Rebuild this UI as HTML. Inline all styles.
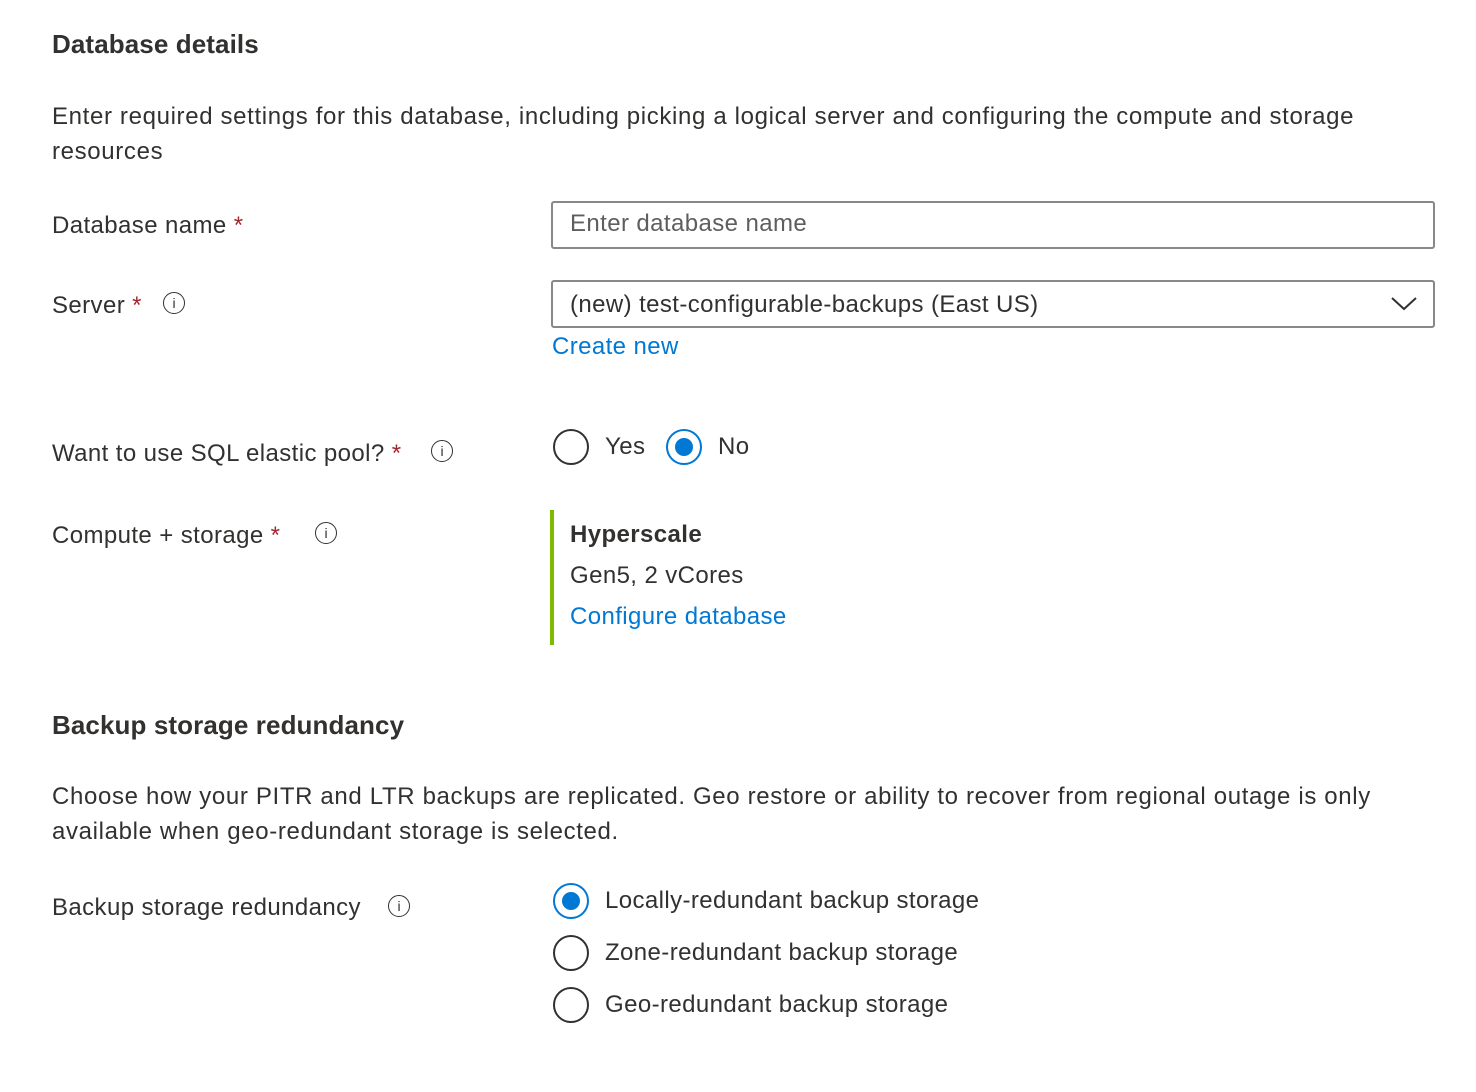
<!DOCTYPE html><html><head><style>
body{margin:0;width:1476px;height:1092px;background:#fff;font-family:"Liberation Sans",sans-serif;color:#323130;position:relative;overflow:hidden}
.a{position:absolute;white-space:nowrap;font-size:24px;line-height:30px;letter-spacing:0.4px}
h2{position:absolute;margin:0;font-size:26px;font-weight:600;line-height:32px;left:52px;letter-spacing:0.1px}
.req{color:#a4262c}
.info{position:absolute;width:20px;height:20px;border:1.5px solid #323130;border-radius:50%;font-size:14px;line-height:20px;text-align:center}
.box{position:absolute;left:551px;width:880px;height:44px;border:2px solid #8a8886;border-radius:3px}
.r{position:absolute;width:32px;height:32px;border:2px solid #323130;border-radius:50%}
.r.on{border-color:#0078d4}
.r.on:after{content:"";position:absolute;left:7px;top:7px;width:18px;height:18px;border-radius:50%;background:#0078d4}
.link{color:#0078d4}
.p{letter-spacing:0.65px;line-height:35px;white-space:normal;width:1345px}
</style></head><body>
<h2 style="top:28px">Database details</h2>
<div class="a p" style="left:52px;top:99px">Enter required settings for this database, including picking a logical server and configuring the compute and storage resources</div>
<div class="a" style="left:52px;top:211px">Database name <span class="req">*</span></div>
<div class="box" style="top:201px"></div>
<div class="a" style="left:570px;top:209px;color:#605e5c">Enter database name</div>
<div class="a" style="left:52px;top:291px">Server <span class="req">*</span></div>
<div class="info" style="left:163px;top:292px">i</div>
<div class="box" style="top:280px"></div>
<div class="a" style="left:570px;top:290px">(new) test-configurable-backups (East US)</div>
<svg style="position:absolute;left:1390px;top:296px" width="28" height="16"><path d="M2 2 L14 13 L26 2" fill="none" stroke="#323130" stroke-width="2"/></svg>
<div class="a link" style="left:552px;top:332px">Create new</div>
<div class="a" style="left:52px;top:439px">Want to use SQL elastic pool? <span class="req">*</span></div>
<div class="info" style="left:431px;top:440px">i</div>
<div class="r" style="left:553px;top:429px"></div>
<div class="a" style="left:605px;top:432px">Yes</div>
<div class="r on" style="left:666px;top:429px"></div>
<div class="a" style="left:718px;top:432px">No</div>
<div class="a" style="left:52px;top:521px">Compute + storage <span class="req">*</span></div>
<div class="info" style="left:315px;top:522px">i</div>
<div style="position:absolute;left:550px;top:510px;width:4px;height:135px;background:#7fba00"></div>
<div class="a" style="left:570px;top:520px;font-weight:bold">Hyperscale</div>
<div class="a" style="left:570px;top:561px">Gen5, 2 vCores</div>
<div class="a link" style="left:570px;top:602px">Configure database</div>
<h2 style="top:709px">Backup storage redundancy</h2>
<div class="a p" style="left:52px;top:779px">Choose how your PITR and LTR backups are replicated. Geo restore or ability to recover from regional outage is only available when geo-redundant storage is selected.</div>
<div class="a" style="left:52px;top:893px">Backup storage redundancy</div>
<div class="info" style="left:388px;top:895px">i</div>
<div class="r on" style="left:553px;top:883px"></div>
<div class="a" style="left:605px;top:886px">Locally-redundant backup storage</div>
<div class="r" style="left:553px;top:935px"></div>
<div class="a" style="left:605px;top:938px">Zone-redundant backup storage</div>
<div class="r" style="left:553px;top:987px"></div>
<div class="a" style="left:605px;top:990px">Geo-redundant backup storage</div>
</body></html>
